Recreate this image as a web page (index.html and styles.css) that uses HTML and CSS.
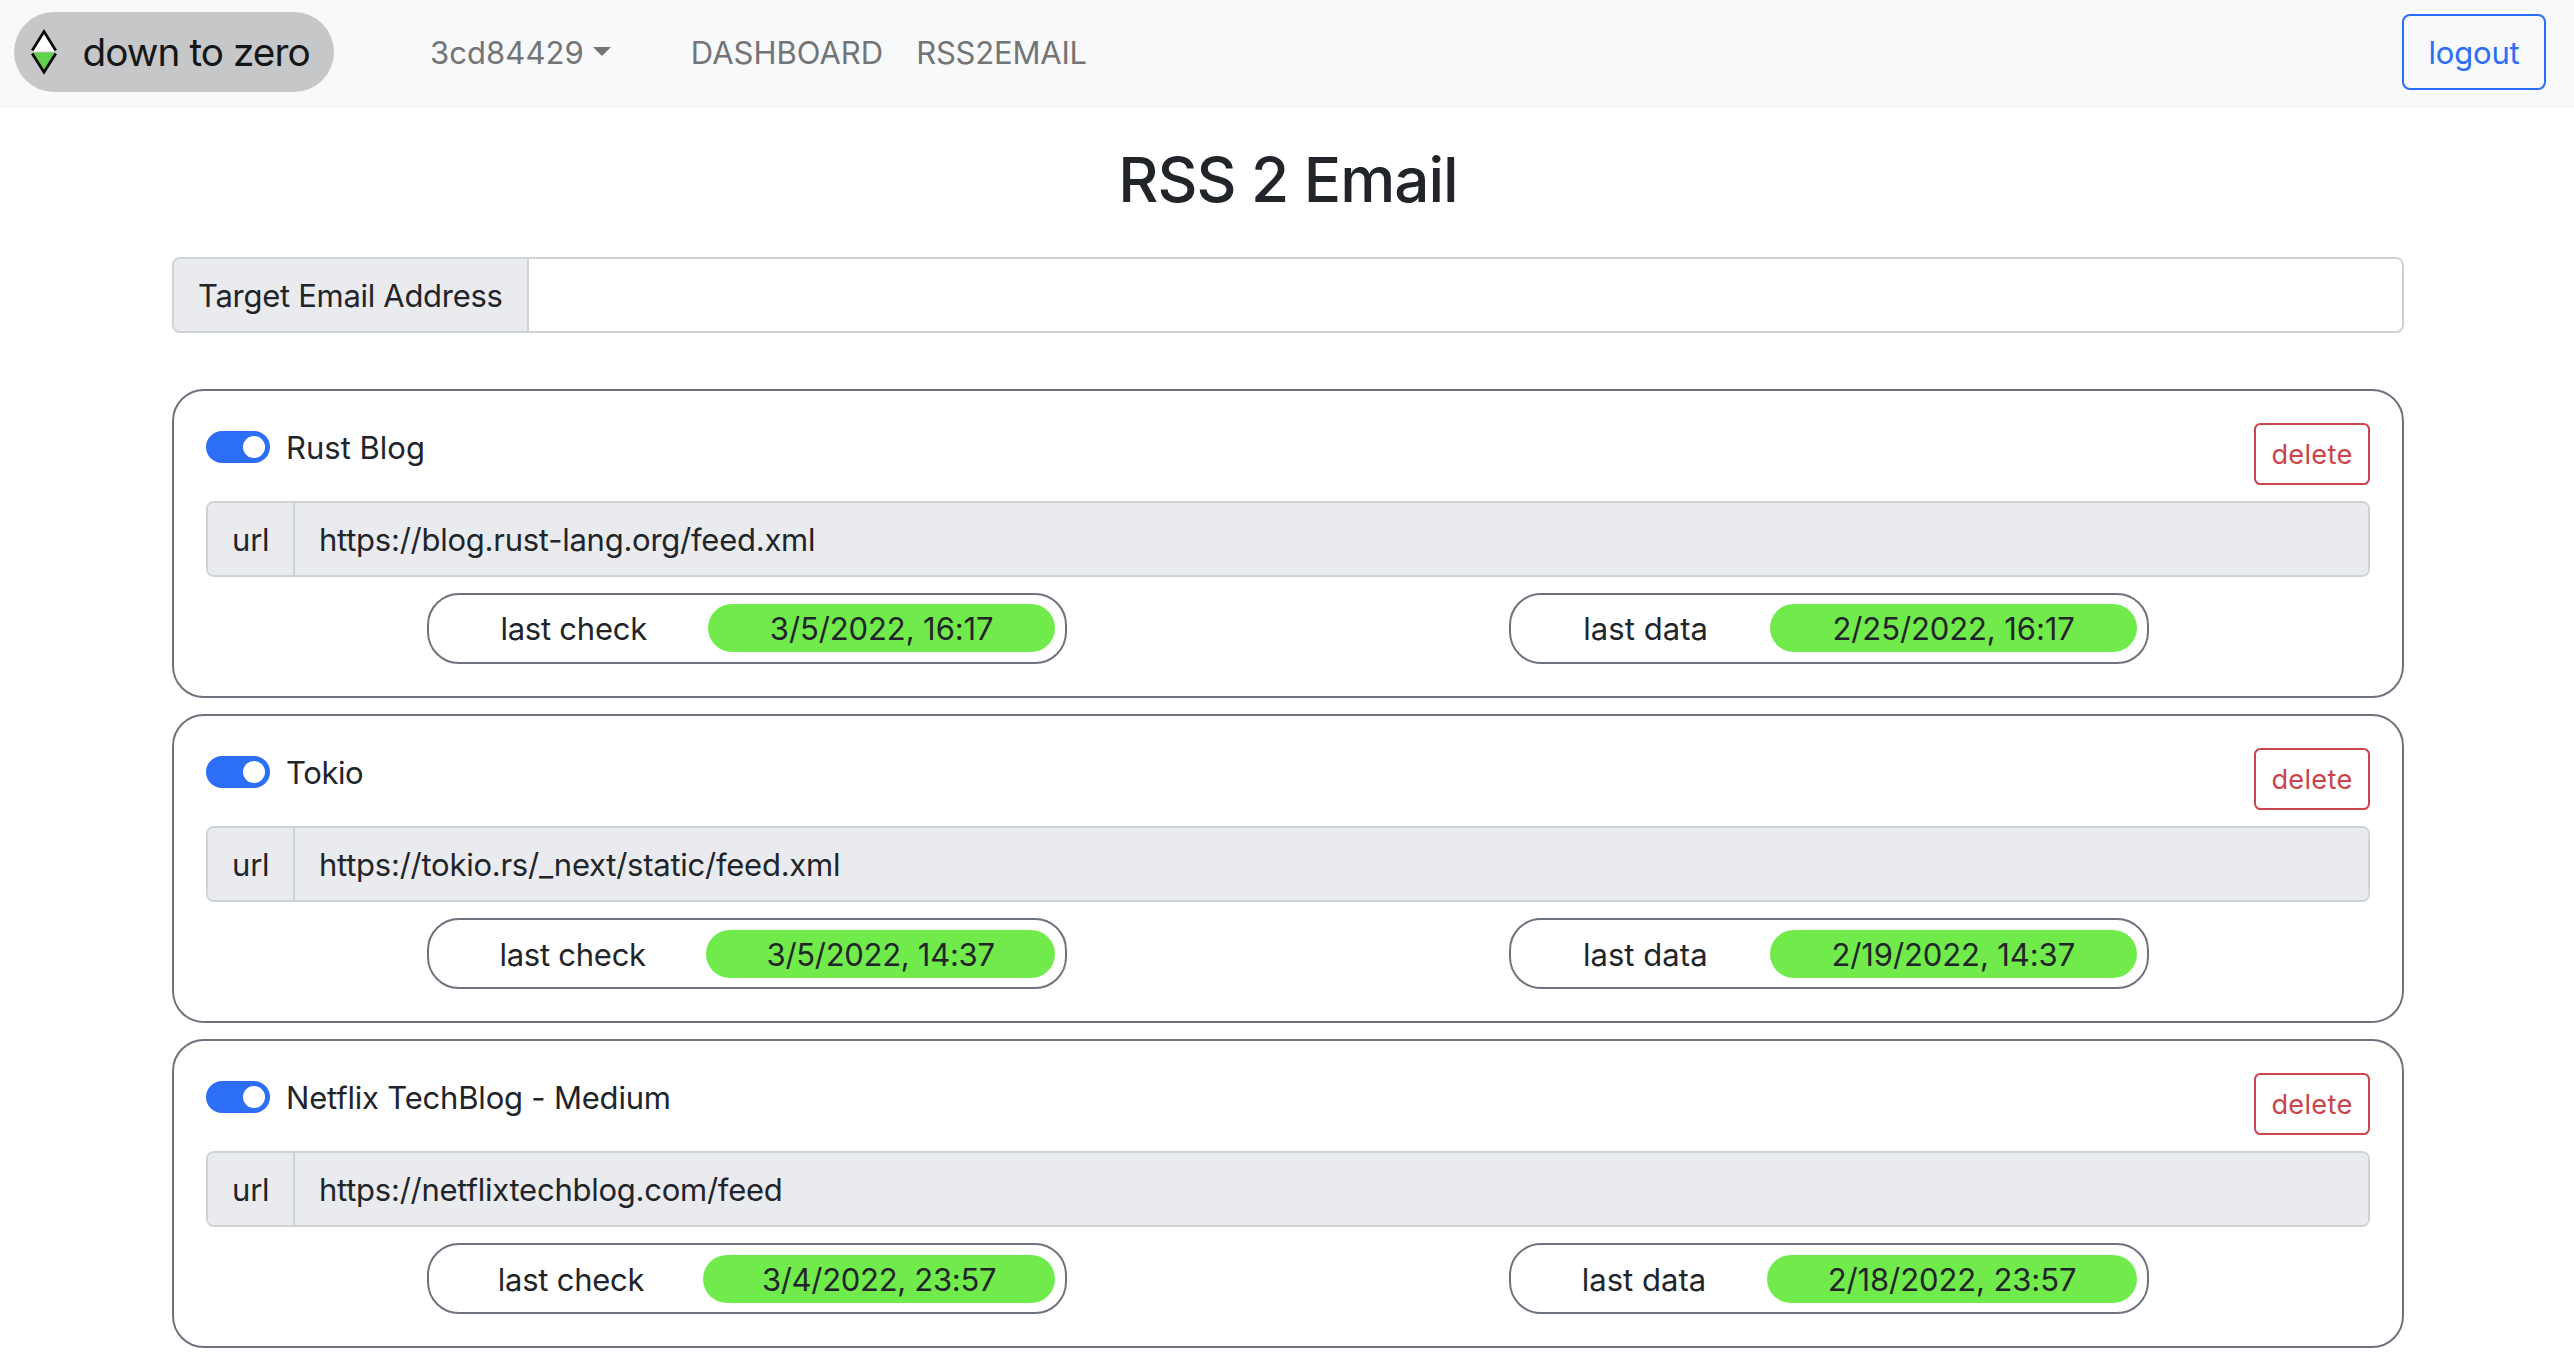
FILE: index.html
```html
<!DOCTYPE html>
<html lang="en">
<head>
<meta charset="utf-8">
<title>RSS 2 Email</title>
<link rel="stylesheet" href="styles.css">
</head>
<body>
<nav class="navbar">
  <a class="brand">
    <svg class="brand-logo" viewBox="0 0 28 46" width="28" height="46">
      <path d="M14 3 L25.6 22.5 H2.4 Z" fill="#fff"/>
      <path d="M2.4 23.5 H25.6 L14 42.5 Z" fill="#62d04a"/>
      <path d="M2.2 21.5 L14 2.6 L25.8 21.5 M2.2 24.5 L14 43.2 L25.8 24.5" fill="none" stroke="#0b0b0b" stroke-width="2.8"/>
    </svg>
    <span class="brand-name">down to zero</span>
  </a>
  <a class="nav-link account">3cd84429<span class="caret"></span></a>
  <a class="nav-link dashboard">DASHBOARD</a>
  <a class="nav-link rss">RSS2EMAIL</a>
  <button class="btn btn-logout">logout</button>
</nav>
<main class="container">
  <h1 class="title">RSS 2 Email</h1>
  <div class="input-group email">
    <span class="addon email-label">Target Email Address</span>
    <span class="field"></span>
  </div>
  <div class="feeds">
    <section class="card">
      <header class="card-head">
        <span class="switch"><span class="knob"></span></span>
        <span class="name">Rust Blog</span>
        <button class="btn btn-delete">delete</button>
      </header>
      <div class="input-group">
        <span class="addon url-label">url</span>
        <span class="field readonly">https://blog.rust-lang.org/feed.xml</span>
      </div>
      <div class="stats">
        <div class="stat"><span class="stat-label check">last check</span><span class="stat-date">3/5/2022, 16:17</span></div>
        <div class="stat"><span class="stat-label data">last data</span><span class="stat-date">2/25/2022, 16:17</span></div>
      </div>
    </section>
    <section class="card">
      <header class="card-head">
        <span class="switch"><span class="knob"></span></span>
        <span class="name short">Tokio</span>
        <button class="btn btn-delete">delete</button>
      </header>
      <div class="input-group">
        <span class="addon url-label">url</span>
        <span class="field readonly">https://tokio.rs/_next/static/feed.xml</span>
      </div>
      <div class="stats">
        <div class="stat"><span class="stat-label check">last check</span><span class="stat-date tight">3/5/2022, 14:37</span></div>
        <div class="stat"><span class="stat-label data">last data</span><span class="stat-date">2/19/2022, 14:37</span></div>
      </div>
    </section>
    <section class="card">
      <header class="card-head">
        <span class="switch"><span class="knob"></span></span>
        <span class="name long">Netflix TechBlog - Medium</span>
        <button class="btn btn-delete">delete</button>
      </header>
      <div class="input-group">
        <span class="addon url-label">url</span>
        <span class="field readonly">https://netflixtechblog.com/feed</span>
      </div>
      <div class="stats">
        <div class="stat"><span class="stat-label check">last check</span><span class="stat-date tight">3/4/2022, 23:57</span></div>
        <div class="stat"><span class="stat-label data">last data</span><span class="stat-date">2/18/2022, 23:57</span></div>
      </div>
    </section>
  </div>
</main>
</body>
</html>
```
FILE: styles.css
```css
* { box-sizing: border-box; }

body {
  margin: 0;
  background: #fff;
  color: #212529;
  font-family: Inter, "Liberation Sans", sans-serif;
  font-size: 31px;
  line-height: 48px;
  white-space: nowrap;
  overflow: hidden;
}

.navbar {
  display: flex;
  align-items: flex-start;
  height: 108px;
  padding: 12px 28px 0 14px;
  background: #f8f9fb;
}

.brand {
  display: flex;
  align-items: center;
  width: 320px;
  height: 80px;
  padding-left: 16px;
  border-radius: 40px;
  background: #c6c7c9;
  color: #151617;
}

.brand-logo { flex: none; }

.brand-name {
  margin-left: 24.5px;
  font-size: 38.75px;
  letter-spacing: -0.97px;
}

.nav-link {
  padding-top: 17px;
  color: #737475;
}

.account {
  display: flex;
  align-items: center;
  margin-left: 96px;
  letter-spacing: 0.08px;
}

.caret {
  margin: -4px 0 0 9px;
  border: solid transparent;
  border-width: 9.6px 9.6px 0;
  border-top-color: #737475;
}

.dashboard { margin-left: 80px; }
.rss { margin-left: 33px; letter-spacing: -0.2px; }

.btn {
  font: inherit;
  background: transparent;
  border: 2px solid;
  padding: 2px 0 0;
}

.btn-logout {
  width: 144px;
  height: 76px;
  margin: 2px 0 0 auto;
  border-radius: 8px;
  color: #2c6ef5;
  letter-spacing: -0.16px;
}

.container {
  width: 2232px;
  margin-left: 172px;
}

.title {
  margin: 32px 0 40px;
  padding-top: 2px;
  height: 76.8px;
  font-size: 62px;
  line-height: 76.8px;
  font-weight: 500;
  letter-spacing: -1px;
  text-align: center;
}

.input-group {
  display: flex;
  height: 76px;
  border: 2px solid #ced3d8;
  border-radius: 8px;
  overflow: hidden;
  line-height: 74px;
}

.addon {
  flex: none;
  padding-left: 24px;
  border-right: 2px solid #ced3d8;
  background: #eaebef;
}

.email-label { width: 355px; letter-spacing: -0.295px; }
.url-label { width: 87px; letter-spacing: -0.2px; }

.field { flex: 1; padding-left: 24px; }
.readonly { background: #eaebef; letter-spacing: -0.25px; }

.feeds {
  display: flex;
  flex-direction: column;
  gap: 16px;
  margin-top: 56px;
}

.card {
  height: 309.2px;
  padding: 32px;
  border: 2px solid #6e747d;
  border-radius: 32px;
}

.card-head {
  display: flex;
  align-items: flex-start;
  height: 78px;
}

.switch {
  display: flex;
  align-items: center;
  justify-content: flex-end;
  width: 64px;
  height: 32px;
  margin: 8px 16px 0 0;
  padding-right: 5px;
  border-radius: 16px;
  background: #2c6ef5;
}

.knob {
  width: 22px;
  height: 22px;
  border-radius: 50%;
  background: #fff;
}

.name { padding-top: 1px; }
.short { letter-spacing: -0.4px; }
.long { letter-spacing: -0.2px; }

.btn-delete {
  width: 116px;
  height: 62px;
  margin-left: auto;
  border-radius: 6.4px;
  color: #cb444a;
  font-size: 27.25px;
  letter-spacing: 0.26px;
}

.stats {
  display: grid;
  grid-template-columns: 1fr 1fr;
  justify-items: center;
  margin-top: 16px;
}

.stat {
  display: flex;
  width: 640px;
  height: 71.2px;
  padding: 9.6px 10px;
  border: 2px solid #6e747d;
  border-radius: 32px;
  line-height: 50px;
  text-align: center;
}

.stat-label, .stat-date { flex: 1 1 auto; }
.check { letter-spacing: -0.25px; }
.data { letter-spacing: 0.05px; }

.stat-date {
  border-radius: 24px;
  background: #71eb4b;
  letter-spacing: -0.1px;
}

.tight { letter-spacing: -0.3px; }
```
